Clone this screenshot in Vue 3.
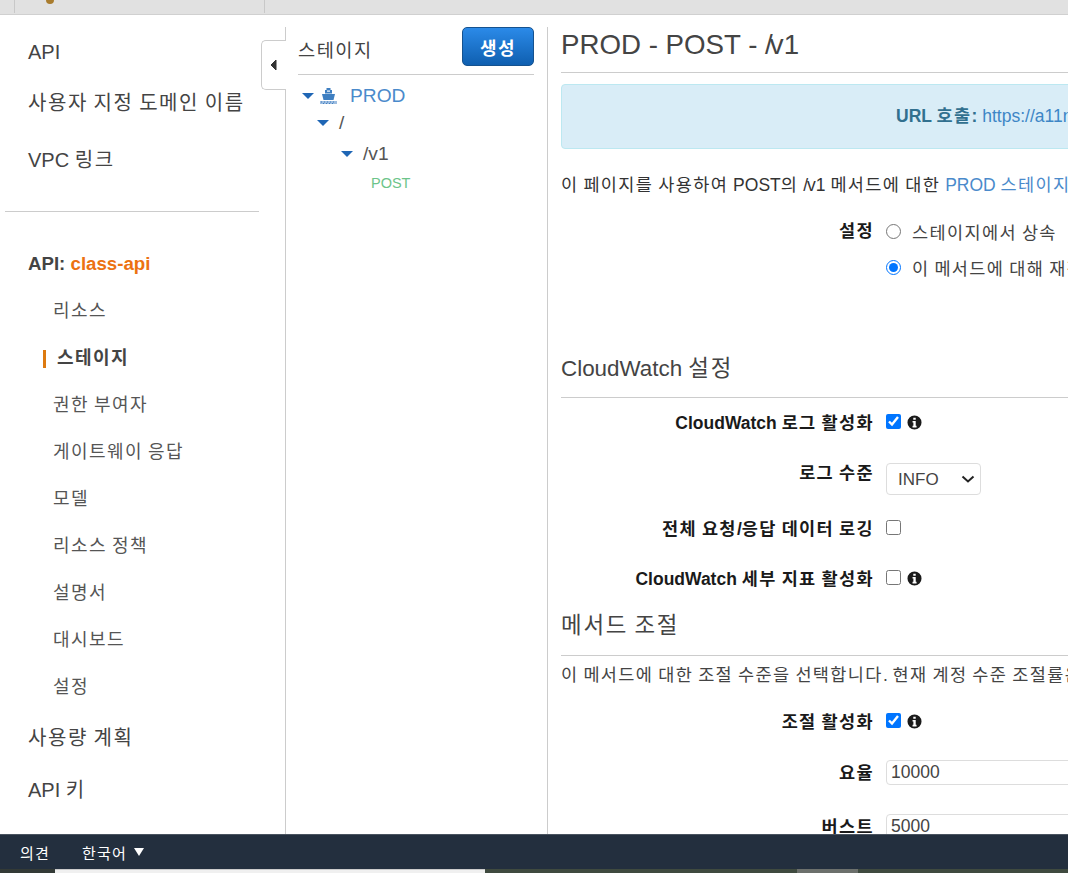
<script setup>
import { h } from 'vue'

// Hangul runs get their own class so only they take the wider advance of the reference.
const T = (props) =>
  props.t.split(/([가-힣]+)/).map((part) => (/[가-힣]/.test(part) ? h('span', { class: 'ko' }, part) : part))
T.props = ['t']

const subNav = [
  { label: '리소스' },
  { label: '스테이지', active: true },
  { label: '권한 부여자' },
  { label: '게이트웨이 응답' },
  { label: '모델' },
  { label: '리소스 정책' },
  { label: '설명서' },
  { label: '대시보드' },
  { label: '설정' },
]
</script>

<template>
  <div class="page">
    <header class="topbar">
      <div class="tab-a"><span class="cube"></span></div>
    </header>

    <div class="main">
      <nav class="sidenav">
        <a class="nav-top n1">API</a>
        <a class="nav-top n2"><T t="사용자 지정 도메인 이름" /></a>
        <a class="nav-top n3"><T t="VPC 링크" /></a>
        <hr class="nav-rule" />
        <div class="api-title">API: <span>class-api</span></div>
        <ul class="subnav">
          <li v-for="item in subNav" :key="item.label" :class="{ active: item.active }"><T :t="item.label" /></li>
        </ul>
        <a class="nav-top n4"><T t="사용량 계획" /></a>
        <a class="nav-top n5"><T t="API 키" /></a>
      </nav>

      <div class="collapse-tab">
        <svg width="7" height="12" viewBox="0 0 7 12"><path d="M6 1 1 6l5 5z" fill="#333" stroke="#333" /></svg>
      </div>

      <section class="stages">
        <div class="stages-head">
          <h2><T t="스테이지" /></h2>
          <button class="create"><T t="생성" /></button>
        </div>
        <div class="tree">
          <div class="row r-prod">
            <i class="caret"></i>
            <svg class="ship" width="17" height="16" viewBox="0 0 17 16">
              <path d="M6.500 0h4v2h1.500v3.500H5V2h1.500z" fill="#3f7fc1" />
              <rect x="7" y="2.500" width="3" height="1.200" fill="#fff" />
              <path d="M2 6h13l-1.500 6h-10z" fill="#3f7fc1" />
              <path d="M0 13h17v3H0z" fill="#9dbde0" />
              <path d="M1 13.500h1v1H1zm3 0h1v1H4zm3 0h1v1H7zm3 0h1v1h-1zm3 0h1v1h-1zm-10 1.500h1v1H3zm3 0h1v1H6zm3 0h1v1H9zm3 0h1v1h-1z" fill="#3f7fc1" />
            </svg>
            <span class="prod">PROD</span>
          </div>
          <div class="row r-root"><i class="caret"></i><span class="path">/</span></div>
          <div class="row r-v1"><i class="caret"></i><span class="path">/v1</span></div>
          <div class="post">POST</div>
        </div>
      </section>

      <section class="detail">
        <h1>PROD - POST - <span class="sl">/</span>v1</h1>
        <div class="alert"><b><T t="URL 호출:" /></b> <a>https://a11n2example.execute-api.ap-northeast-2.amazonaws.com/PROD/v1</a></div>
        <p class="intro"><T t="이 페이지를 사용하여 POST의 " /><span class="sl-s">/</span><T t="v1 메서드에 대한 " /><a><T t="PROD 스테이지" /></a><T t=" 설정을 재정의합니다." /></p>

        <div class="field f-set">
          <label class="lab"><T t="설정" /></label>
          <div class="radios">
            <label class="opt"><input type="radio" name="s" /><span><T t="스테이지에서 상속" /></span></label>
            <label class="opt"><input type="radio" name="s" checked /><span><T t="이 메서드에 대해 재정의" /></span></label>
          </div>
        </div>

        <h3 class="cw"><T t="CloudWatch 설정" /></h3>

        <div class="field f1">
          <label class="lab"><T t="CloudWatch 로그 활성화" /></label>
          <div class="ctl"><input type="checkbox" checked /><svg class="info" viewBox="0 0 16 16"><use href="#i" /></svg></div>
        </div>
        <div class="field f2">
          <label class="lab"><T t="로그 수준" /></label>
          <div class="sel-wrap">
            <select class="sel"><option>INFO</option></select>
            <svg class="chev" width="14" height="8" viewBox="0 0 14 8"><path d="M1.500 1.500 7 6.500l5.500-5" fill="none" stroke="#222" stroke-width="2" /></svg>
          </div>
        </div>
        <div class="field f3">
          <label class="lab"><T t="전체 요청/응답 데이터 로깅" /></label>
          <div class="ctl"><input type="checkbox" /></div>
        </div>
        <div class="field f4">
          <label class="lab"><T t="CloudWatch 세부 지표 활성화" /></label>
          <div class="ctl"><input type="checkbox" /><svg class="info" viewBox="0 0 16 16"><use href="#i" /></svg></div>
        </div>

        <h3 class="th"><T t="메서드 조절" /></h3>
        <p class="th-p"><T t="이 메서드에 대한 조절 수준을 선택합니다. 현재 계정 수준 조절률은 초당 10000개 요청이며 버스트는 5000개 요청입니다." /></p>

        <div class="field f5">
          <label class="lab"><T t="조절 활성화" /></label>
          <div class="ctl"><input type="checkbox" checked /><svg class="info" viewBox="0 0 16 16"><use href="#i" /></svg></div>
        </div>
        <div class="field f6">
          <label class="lab lab-in"><T t="요율" /></label>
          <input class="txt" value="10000" />
        </div>
        <div class="field f7">
          <label class="lab lab-in"><T t="버스트" /></label>
          <input class="txt" value="5000" />
        </div>
      </section>
    </div>

    <footer class="footer">
      <span class="fb"><T t="의견" /></span>
      <span class="lang"><T t="한국어" /></span>
      <i class="lang-caret"></i>
    </footer>
    <div class="taskbar"><span class="tb-dark"></span><span class="tb-light"></span><span class="tb-fill"></span><span class="tb-thumb"></span><span class="tb-end"></span></div>

    <svg width="0" height="0" class="defs">
      <symbol id="i" viewBox="0 0 16 16">
        <path fill-rule="evenodd" fill="#1a1a1a" d="M8 .5a7.500 7.500 0 1 0 0 15 7.500 7.500 0 0 0 0-15zM6.700 2.800h2.600v2.300H6.700zM5.900 6.300h3.400v5.100h.9v1.800H5.900v-1.800h.9V8.100h-.9z" />
      </symbol>
    </svg>
  </div>
</template>

<style>
html, body { margin: 0; overflow: hidden; background: #fff; }
.ko { letter-spacing: 0.08em; }
</style>

<style scoped>
* { box-sizing: border-box; }
.page {
  width: 1068px; height: 873px; display: flex; flex-direction: column; overflow: hidden; position: relative;
  font-family: "Liberation Sans", "Noto Sans CJK KR", sans-serif; color: #444; background: #fff;
}
.defs { position: absolute; }
.topbar { height: 15px; flex: none; background: #e1e1e1; border-bottom: 1px solid #d0d0d0; display: flex; }
.tab-a { width: 251px; margin-left: 14px; height: 13px; border-left: 1px solid #c8c8c8; border-right: 1px solid #c8c8c8; padding-left: 31px; }
.cube { display: block; width: 8px; height: 4px; background: #a97c2e; border-radius: 0 0 4px 4px; }
.main { flex: 1; min-height: 0; display: flex; position: relative; overflow: hidden; }

.sidenav { width: 286px; flex: none; margin-top: 12px; border-right: 1px solid #ccc; display: flex; flex-direction: column; }
.nav-top { display: block; font-size: 20px; line-height: 24px; color: #444; padding-left: 28px; white-space: nowrap; }
.n1 { margin-top: 13px; }
.n2 { margin-top: 27px; }
.n3 { margin-top: 33px; }
.nav-rule { border: 0; border-top: 1px solid #ccc; width: 254px; margin: 39px 0 0 5px; }
.api-title { margin: 41px 0 0 28px; font-size: 18.670px; font-weight: 700; line-height: 22px; color: #444; }
.api-title span { color: #ec7211; }
.subnav { list-style: none; margin: 13px 0 0; padding: 0; }
.subnav li { height: 47px; line-height: 47px; font-size: 18px; padding-left: 53px; color: #555; position: relative; }
.subnav li.active { font-weight: 700; color: #444; padding-left: 57px; }
.subnav li.active::before { content: ""; position: absolute; left: 43px; top: 15px; width: 3px; height: 18px; background: #dd7a10; }
.n4 { margin-top: 15px; }
.n5 { margin-top: 28px; }

.collapse-tab { position: absolute; left: 261px; top: 25px; width: 25px; height: 50px; background: #fff; border: 1px solid #ccc; border-right: 0; border-radius: 5px 0 0 5px; display: flex; align-items: center; padding-left: 8px; }

.stages { width: 262px; flex: none; margin-top: 12px; border-right: 1px solid #ccc; padding: 0 13px 0 12px; }
.stages-head { display: flex; justify-content: space-between; height: 48px; border-bottom: 1px solid #ccc; }
.stages-head h2 { margin: 0; padding-top: 12px; font-size: 18.670px; line-height: 24px; font-weight: 400; color: #444; }
.create { width: 72px; height: 39px; border-radius: 5px; border: 1px solid #15528f; background: linear-gradient(#2b8ae8, #0f5fb0); color: #fff; font: 700 18px "Liberation Sans", "Noto Sans CJK KR", sans-serif; padding: 0; }
.tree { font-size: 19.200px; }
.row { display: flex; align-items: center; height: 24px; }
.caret { display: block; width: 0; height: 0; border-left: 6px solid transparent; border-right: 6px solid transparent; border-top: 6px solid #1f66b5; }
.r-prod { margin-top: 9px; padding-left: 4px; }
.ship { margin-left: 6px; }
.prod { margin-left: 13px; color: #4a8acb; }
.r-root { margin-top: 3px; padding-left: 19px; }
.r-root .path { margin-left: 10px; }
.r-v1 { margin-top: 7px; padding-left: 43px; }
.r-v1 .path { margin-left: 10px; }
.path { color: #555; }
.post { font-size: 14.500px; line-height: 16px; color: #6cc48a; margin: 9px 0 0 73px; }

.detail { flex: 1; min-width: 0; padding: 12px 0 0 13px; overflow: hidden; }
.detail h1 { margin: 0; height: 46px; border-bottom: 1px solid #ccc; font-size: 27.700px; line-height: 36px; font-weight: 400; color: #444; white-space: nowrap; width: 600px; }
.sl { margin-right: -3px; }
.sl-s { margin-right: -1px; }
.alert { width: 700px; height: 65px; margin-top: 11px; background: #d9edf7; border: 1px solid #bce8f1; border-radius: 4px; padding: 20px 0 0 334px; font-size: 17.500px; line-height: 22px; color: #31708f; white-space: nowrap; }
.alert a { color: #3d86c6; }
.intro { margin: 25px 0 0; font-size: 17.500px; line-height: 22px; color: #333; white-space: nowrap; }
.intro a { color: #4a8acb; }
.field { display: flex; align-items: flex-start; white-space: nowrap; }
.lab { width: 313px; flex: none; text-align: right; font-weight: 700; font-size: 17.500px; line-height: 22px; color: #1a1a1a; }
.lab-in { padding-top: 2px; }
.f-set { margin-top: 24px; }
.radios { margin-left: 12px; }
.opt { display: flex; align-items: center; height: 22px; font-size: 17.500px; color: #444; margin-bottom: 14px; }
.opt input { width: 15px; height: 15px; margin: 0 11px 0 0; accent-color: #0075ff; }
.cw, .th { margin: 0; width: 700px; font-size: 22.400px; line-height: 28px; font-weight: 400; color: #444; border-bottom: 1px solid #ccc; }
.cw { margin-top: 57px; height: 49px; padding-top: 6px; }
.th { margin-top: 19px; height: 47px; padding-top: 3px; }
.ctl { display: flex; align-items: center; margin-left: 12px; height: 22px; }
.ctl input { width: 15px; height: 15px; margin: -4px 0 0; accent-color: #0075ff; }
.info { width: 15px; height: 15px; margin: -2px 0 0 6px; }
.f1 { margin-top: 14px; }
.f2 { margin-top: 28px; }
.f3 { margin-top: 23px; }
.f4 { margin-top: 28px; }
.sel-wrap { position: relative; margin-left: 12px; margin-top: 1px; width: 95px; height: 32px; }
.chev { position: absolute; right: 6px; top: 12px; }
.sel { appearance: none; width: 95px; height: 32px; font: 17px "Liberation Sans", sans-serif; color: #444; background: #fff; border: 1px solid #ddd; border-radius: 4px; padding-left: 11px; }
.th-p { margin: 8px 0 0; font-size: 17.500px; line-height: 22px; color: #444; white-space: nowrap; }
.f5 { margin-top: 25px; }
.f6 { margin-top: 27px; }
.f7 { margin-top: 29px; }
.txt { margin-left: 12px; width: 400px; height: 25px; border: 1px solid #ddd; border-radius: 4px; padding: 0 4px; font: 17.500px "Liberation Sans", sans-serif; color: #444; }

.footer { height: 35px; flex: none; background: #232f3e; border-top: 1px solid #4a5460; color: #fff; font-size: 15px; display: flex; align-items: center; padding-left: 20px; }
.lang { margin-left: 32px; }
.lang-caret { margin-left: 7px; width: 0; height: 0; border-left: 5px solid transparent; border-right: 5px solid transparent; border-top: 8px solid #fff; }
.taskbar { height: 4px; flex: none; display: flex; background: #3f4a3f; }
.tb-dark { width: 55px; background: #333a36; }
.tb-light { width: 430px; background: #f0f0f0; border-top: 1px solid #ccc; }
.tb-fill { width: 312px; background: #3f4a3f; }
.tb-thumb { width: 61px; background: #6c706c; }
.tb-end { flex: 1; background: #3f4a3f; }
</style>
